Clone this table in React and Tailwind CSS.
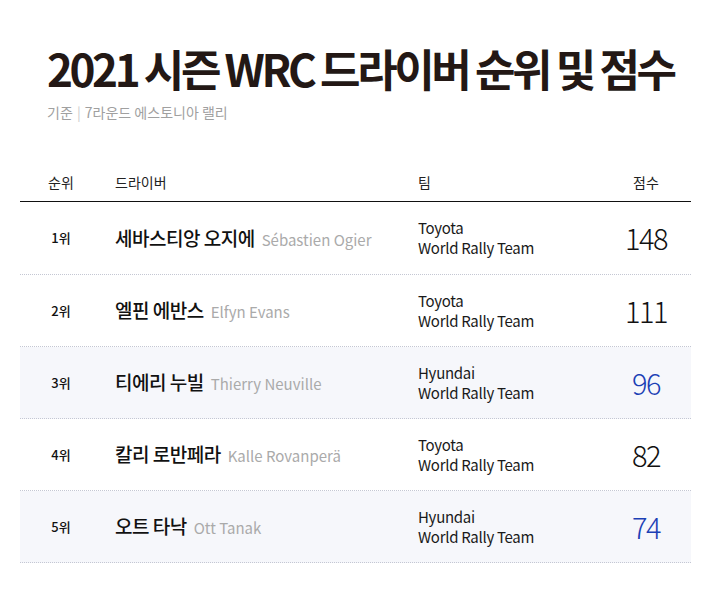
const rows = [
  { rank: '1위', ko: '세바스티앙 오지에', en: 'Sébastien Ogier', team: 'Toyota', score: 148, hyundai: false },
  { rank: '2위', ko: '엘핀 에반스', en: 'Elfyn Evans', team: 'Toyota', score: 111, hyundai: false },
  { rank: '3위', ko: '티에리 누빌', en: 'Thierry Neuville', team: 'Hyundai', score: 96, hyundai: true },
  { rank: '4위', ko: '칼리 로반페라', en: 'Kalle Rovanperä', team: 'Toyota', score: 82, hyundai: false },
  { rank: '5위', ko: '오트 타낙', en: 'Ott Tanak', team: 'Hyundai', score: 74, hyundai: true },
];

export default function App() {
  return (
    <div className="w-[712px] h-[600px] bg-white text-[#111]" style={{ fontFamily: '"Noto Sans CJK KR", "Noto Sans", sans-serif' }}>
      {/* heading */}
      <div className="pt-[38px] pl-[47px]">
        <h1 className="text-[44px] leading-[60px] font-bold tracking-[-3.4px] text-[#231815]">
          2021 시즌 WRC 드라이버 순위 및 점수
        </h1>
        <p className="mt-[4px] text-[14px] leading-[20px] text-[#a0a0a0] tracking-[0px]">
          기준 <span className="text-[#ccc] px-[1px]">|</span> 7라운드 에스토니아 랠리
        </p>
      </div>

      {/* table */}
      <div className="mx-[20px] mt-[41px] w-[671px]">
        <div className="flex items-center h-[39px] border-b border-[#111] text-[14px] text-[#222]">
          <div className="w-[80px] text-center pl-[2px]">순위</div>
          <div className="w-[318px] pl-[15px]">드라이버</div>
          <div className="flex-1">팀</div>
          <div className="w-[90px] text-center">점수</div>
        </div>
        {rows.map((r, i) => (
          <div
            key={i}
            className={`flex items-center ${i === 0 ? 'h-[73px]' : 'h-[72px]'} border-b border-dotted border-[#c4c7d3] ${r.hyundai ? 'bg-[#f6f7fb]' : 'bg-white'}`}
          >
            <div className="w-[80px] text-center text-[13px] font-medium pl-[2px]">{r.rank}</div>
            <div className="w-[318px] pl-[15px] flex items-baseline gap-[7px]">
              <span className="text-[19px] font-medium tracking-[-0.5px]">{r.ko}</span>
              <span className="text-[15px] text-[#aaa]">{r.en}</span>
            </div>
            <div className="flex-1 text-[15px] leading-[20px] tracking-[-0.3px] text-[#1a1a1a]">
              <div>{r.team}</div>
              <div>World Rally Team</div>
            </div>
            <div className={`w-[90px] text-center text-[29px] font-light tracking-[-1.5px] ${r.hyundai ? 'text-[#1c3fb5]' : 'text-[#111]'}`}>
              {r.score}
            </div>
          </div>
        ))}
      </div>
    </div>
  );
}
